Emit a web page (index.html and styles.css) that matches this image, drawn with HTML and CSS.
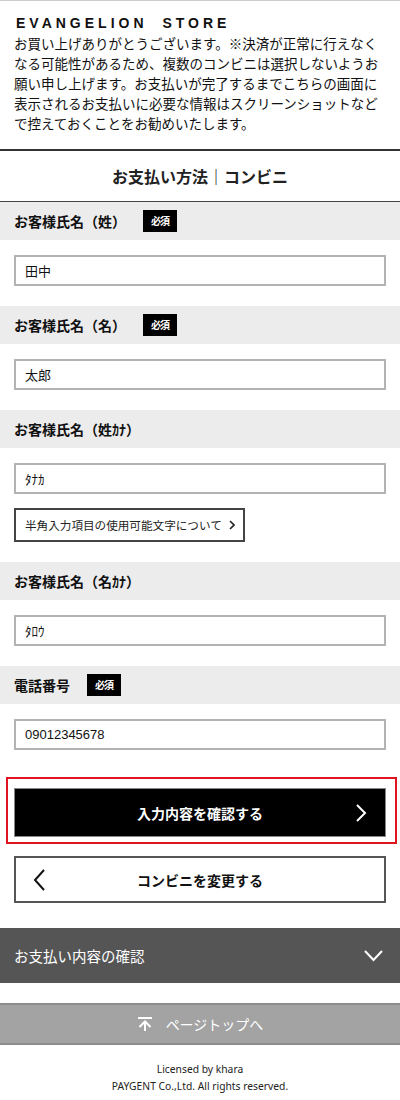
FILE: index.html
```html
<!DOCTYPE html>
<html lang="ja">
<head>
    <meta charset="UTF-8">
    <meta name="viewport" content="width=device-width, initial-scale=1.0">
    <title>お支払い方法｜コンビニ</title>
    <link rel="stylesheet" href="styles.css">
</head>
<body>

<header class="tienda">
    <p class="tienda-nombre">EVANGELION STORE</p>
    <p class="tienda-aviso">お買い上げありがとうございます。※決済が正常に行えなくなる可能性があるため、複数のコンビニは選択しないようお願い申し上げます。お支払いが完了するまでこちらの画面に表示されるお支払いに必要な情報はスクリーンショットなどで控えておくことをお勧めいたします。</p>
</header>

<h1 class="titulo">お支払い方法｜コンビニ</h1>

<form class="formulario">
    <div class="campo">
        <div class="campo-label">お客様氏名（姓）<span class="requerido">必須</span></div>
        <div class="campo-cuerpo">
            <input class="entrada" type="text" value="田中">
        </div>
    </div>
    <div class="campo">
        <div class="campo-label">お客様氏名（名）<span class="requerido">必須</span></div>
        <div class="campo-cuerpo">
            <input class="entrada" type="text" value="太郎">
        </div>
    </div>
    <div class="campo">
        <div class="campo-label">お客様氏名（姓ｶﾅ）</div>
        <div class="campo-cuerpo">
            <input class="entrada" type="text" value="ﾀﾅｶ">
            <a class="ayuda" href="#">半角入力項目の使用可能文字について
                <svg width="6" height="10" viewBox="0 0 6 10"><polyline points="1,1 5,5 1,9" fill="none" stroke="#222" stroke-width="1.6"/></svg>
            </a>
        </div>
    </div>
    <div class="campo">
        <div class="campo-label">お客様氏名（名ｶﾅ）</div>
        <div class="campo-cuerpo">
            <input class="entrada" type="text" value="ﾀﾛｳ">
        </div>
    </div>
    <div class="campo">
        <div class="campo-label">電話番号<span class="requerido">必須</span></div>
        <div class="campo-cuerpo">
            <input class="entrada" type="tel" value="09012345678">
        </div>
    </div>

    <div class="marca-roja">
        <button type="button" class="boton boton-negro">
            <span></span>
            <span>入力内容を確認する</span>
            <svg class="flecha-der" width="12" height="18" viewBox="0 0 12 18"><polyline points="2,1 10,9 2,17" fill="none" stroke="#fff" stroke-width="2"/></svg>
        </button>
    </div>

    <button type="button" class="boton boton-blanco">
        <svg class="flecha-izq" width="13" height="22" viewBox="0 0 13 22"><polyline points="11,1 2,11 11,21" fill="none" stroke="#111" stroke-width="2"/></svg>
        <span>コンビニを変更する</span>
        <span></span>
    </button>
</form>

<div class="resumen">
    <span>お支払い内容の確認</span>
    <svg width="19" height="12" viewBox="0 0 19 12"><polyline points="1,1 9.5,10 18,1" fill="none" stroke="#fff" stroke-width="2"/></svg>
</div>

<a class="arriba" href="#">
    <svg width="16" height="14" viewBox="0 0 16 14"><line x1="1" y1="1" x2="15" y2="1" stroke="#fff" stroke-width="2"/><line x1="8" y1="5" x2="8" y2="14" stroke="#fff" stroke-width="2"/><polyline points="2.5,10 8,4.5 13.5,10" fill="none" stroke="#fff" stroke-width="2"/></svg>
    ページトップへ
</a>

<footer class="pie">
    <p>Licensed by khara</p>
    <p>PAYGENT Co.,Ltd. All rights reserved.</p>
</footer>

</body>
</html>
```

FILE: styles.css
```css
body {
    margin: 0;
    padding: 0;
    background-color: #fff;
    color: #111;
    font-family: "Noto Sans CJK JP", "Noto Sans", sans-serif;
    border-top: 1px solid #ccc;
}
p {
    margin: 0;
}
.tienda {
    padding: 12px 14px 16px;
    border-bottom: 2px solid #333;
}
.tienda-nombre {
    font-family: "Liberation Sans", Arial, sans-serif;
    font-weight: bold;
    font-size: 14px;
    line-height: 20px;
    letter-spacing: 4px;
    word-spacing: 7px;
    padding-left: 2px;
}
.tienda-aviso {
    font-size: 13.5px;
    line-height: 20px;
}
.titulo {
    margin: 0;
    height: 50px;
    line-height: 50px;
    text-align: center;
    font-size: 16px;
    font-weight: bold;
    color: #222;
    border-bottom: 1px solid #444;
}
.formulario {
    margin: 0;
}
.campo-label {
    display: flex;
    align-items: center;
    gap: 17px;
    height: 38px;
    padding: 0 14px;
    background-color: #ececec;
    font-size: 14px;
    font-weight: bold;
}
.requerido {
    display: inline-block;
    background-color: #000;
    color: #fff;
    font-size: 10px;
    font-weight: bold;
    line-height: 22px;
    padding: 0 8px;
    letter-spacing: -1px;
}
.campo-cuerpo {
    padding: 15px 14px 20px;
}
.entrada {
    display: block;
    width: 100%;
    height: 31px;
    box-sizing: border-box;
    margin: 0;
    padding: 0 9px;
    border: 2px solid #b3b3b3;
    border-radius: 0;
    font-family: "Liberation Sans", "Noto Sans CJK JP", sans-serif;
    font-size: 13px;
    color: #111;
}
.ayuda {
    display: inline-flex;
    align-items: center;
    gap: 7px;
    margin-top: 14px;
    height: 34px;
    box-sizing: border-box;
    padding: 0 8px 0 9px;
    border: 2px solid #444;
    font-size: 11.6px;
    color: #222;
    text-decoration: none;
}
.marca-roja {
    margin: 7px 3px 0 6px;
    padding: 9px 9px 5px 6px;
    border: 2px solid #e0141e;
}
.boton {
    display: grid;
    grid-template-columns: 1fr auto 1fr;
    align-items: center;
    width: 100%;
    box-sizing: border-box;
    font-family: "Noto Sans CJK JP", sans-serif;
    font-size: 14px;
    font-weight: bold;
    cursor: pointer;
    border-radius: 0;
}
.boton-negro {
    height: 49px;
    padding: 0 18px;
    background-color: #000;
    color: #fff;
    border: 1px solid #888;
}
.flecha-der {
    justify-self: end;
}
.boton-blanco {
    height: 47px;
    margin: 12px 14px 0;
    width: calc(100% - 28px);
    padding: 0 17px;
    background-color: #fff;
    color: #111;
    border: 2px solid #555;
}
.flecha-izq {
    justify-self: start;
}
.resumen {
    display: flex;
    justify-content: space-between;
    align-items: center;
    margin-top: 25px;
    height: 55px;
    padding: 0 17px 0 14px;
    background-color: #555;
    color: #fff;
    font-size: 14.5px;
}
.arriba {
    display: flex;
    justify-content: center;
    align-items: center;
    gap: 13px;
    margin-top: 20px;
    height: 42px;
    box-sizing: border-box;
    background-color: #a3a3a3;
    border-top: 2px solid #8c8c8c;
    border-bottom: 2px solid #8c8c8c;
    color: #fff;
    font-size: 14px;
    text-decoration: none;
}
.pie {
    padding-top: 16px;
    text-align: center;
    font-family: "Noto Sans", sans-serif;
    font-size: 10.3px;
    line-height: 17px;
    color: #222;
}
```
